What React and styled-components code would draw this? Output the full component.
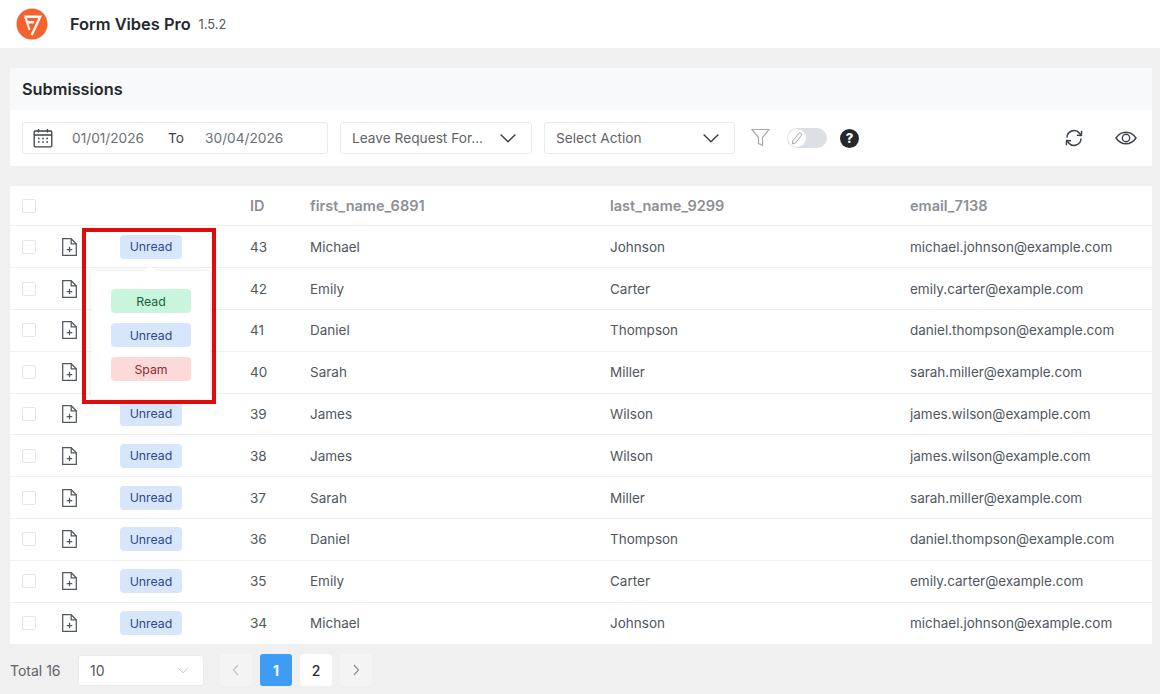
import React from "react";
import styled, { createGlobalStyle } from "styled-components";

const Global = createGlobalStyle`
  html, body { margin: 0; padding: 0; background: #f0f0f1; }
  body { font-family: Inter, "Liberation Sans", sans-serif; color: #50575e; }
  * { box-sizing: border-box; }
`;
const Page = styled.div`position: relative; width: 1160px; height: 694px; overflow: hidden; background: #f0f0f1;`;
const Header = styled.header`height: 48px; background: #fff; display: flex; align-items: center; padding-left: 16px;`;
const Brand = styled.span`margin-left: 22px; font-size: 16.4px; font-weight: 600; color: #23282d;`;
const Version = styled.span`margin-left: 8px; font-size: 12.8px; color: #50575e;`;
const Content = styled.main`padding: 20px 8px 0 10px;`;
const Title = styled.div`height: 42px; background: #f8f9fa; display: flex; align-items: center; padding-left: 12px; font-size: 16.300px; font-weight: 600; color: #23282d;`;
const Toolbar = styled.div`height: 56px; background: #fff; display: flex; align-items: center; padding: 0 15px 0 12px; margin-bottom: 20px;`;
const Field = styled.div`
  height: 32px; width: ${p => p.$w}px; margin-right: ${p => p.$mr || 0}px; border: 1px solid #e8eaec; border-radius: 3px;
  display: flex; align-items: center; padding: 0 ${p => p.$pr || 0}px 0 ${p => p.$pl || 0}px; font-size: 13.700px; color: #5f6368; background: #fff;
`;
const DateText = styled.span`margin-left: ${p => p.$ml}px; color: ${p => p.$dark ? "#3c434a" : "#6b7075"};`;
const Grow = styled.span`flex: 1; white-space: nowrap;`;
const IconSlot = styled.span`display: inline-flex; margin-left: ${p => p.$ml || 0}px;`;
const Toggle = styled.span`
  position: relative; width: 40px; height: 20px; border-radius: 10px; background: #dcdfe6; margin-left: 17px; display: inline-block;
`;
const Knob = styled.span`
  position: absolute; left: 1px; top: 1px; width: 18px; height: 18px; border-radius: 50%; background: #fff;
  display: flex; align-items: center; justify-content: center;
`;
const Help = styled.span`
  width: 19px; height: 19px; margin-left: 13px; border-radius: 50%; background: #23282d; color: #fff; font-size: 13px; font-weight: 800;
  display: flex; align-items: center; justify-content: center;
`;
const Spacer = styled.span`flex: 1;`;
const Table = styled.div`background: #fff;`;
const Row = styled.div`
  display: grid; grid-template-columns: 40px 58px 130px 60px 300px 300px 1fr; align-items: center;
  height: ${p => p.$head ? 40.4 : 41.8}px; border-bottom: ${p => p.$last ? "none" : "1px solid #f0f0f1"};
  font-size: ${p => p.$head ? 14.500 : 13.500}px; color: ${p => p.$head ? "#8c8f94" : "#50575e"}; font-weight: ${p => p.$head ? 600 : 400};
  padding-left: 12px;
`;
const Check = styled.span`display: block; width: 14px; height: 14px; border: 1px solid #e2e4e7; border-radius: 2px; background: #fff;`;
const DocCell = styled.span`display: flex;`;
const BadgeCell = styled.span`display: flex;`;
const Badge = styled.span`
  width: ${p => p.$w || 62}px; height: 24px; border-radius: 4px; display: flex; align-items: center; justify-content: center; font-size: 12.300px;
  background: ${p => p.$kind === "read" ? "#c9f5dd" : p.$kind === "spam" ? "#fcdada" : "#d8e6fb"};
  color: ${p => p.$kind === "read" ? "#14633c" : p.$kind === "spam" ? "#8f2a2a" : "#2a4a8a"};
`;
const Footer = styled.div`display: flex; align-items: center; height: 50px; padding-top: 2px;`;
const Total = styled.span`font-size: 14px; color: #5f6368; width: 68px; white-space: nowrap;`;
const PageSize = styled.div`
  width: 126px; height: 31px; background: #fff; border: 1px solid #e9ebed; border-radius: 3px; display: flex; align-items: center; justify-content: space-between;
  padding: 0 14px 0 11px; font-size: 14px; color: #50575e; margin-right: 16px;
`;
const PageBtn = styled.span`
  width: 32px; height: 32px; margin-right: 8px; border-radius: 3px; display: flex; align-items: center; justify-content: center; font-size: 14px;
  font-weight: ${p => p.$active ? 700 : 500};
  background: ${p => p.$active ? "#3f9cf5" : p.$muted ? "#f4f4f5" : "#fff"}; color: ${p => p.$active ? "#fff" : "#23282d"};
`;
const Popover = styled.div`
  position: absolute; left: 91px; top: 271px; width: 119px; height: 128px; background: #fff; box-shadow: 0 0 6px rgba(0,0,0,.1); border-radius: 2px;
  display: flex; flex-direction: column; gap: 10px; padding: 18px 0 0 20px;
  &::before { content: ""; position: absolute; left: 55px; top: -4px; width: 8px; height: 8px; background: #fff; transform: rotate(45deg); }
`;
const Highlight = styled.div`position: absolute; left: 82px; top: 228px; width: 134px; height: 176px; border: 4px solid #e00b0b; pointer-events: none;`;

const Logo = () => (
  <svg width="32" height="32" viewBox="0 0 32 32">
    <circle cx="16" cy="16" r="15.500" fill="#f4622d" />
    <path d="M7.500 7.500H26L16.800 27.500 14.600 26.700 22.300 10H11.600z" fill="#fff" />
    <path d="M8 8.500 10.800 9.500 14.200 21.500 12.800 22.500z" fill="#fff" />
    <path d="M11.500 13H18.500L17.500 15.400H12.300z" fill="#fff" />
  </svg>
);
const Calendar = () => (
  <svg width="20" height="20" viewBox="0 0 20 20" fill="none" stroke="#3c434a" strokeWidth="1.3">
    <rect x="1.2" y="3" width="17.6" height="15.8" rx="1" />
    <path d="M1.2 7h17.6M5.500 1v3.500M14.500 1v3.500" />
    <path d="M5 10.500h1.600M9.200 10.500h1.600M13.400 10.500h1.600M5 14h1.600M9.200 14h1.600M13.400 14h1.600" strokeWidth="1.500" />
  </svg>
);
const Chevron = ({ size = 18, color = "#3c434a" }) => (
  <svg width={size} height={size * 0.6} viewBox="0 0 18 11" fill="none" stroke={color} strokeWidth="1.500">
    <path d="M1.500 1.500 9 9l7.500-7.500" />
  </svg>
);
const Funnel = () => (
  <svg width="19" height="20" viewBox="0 0 19 20" fill="none" stroke="#a7aaad" strokeWidth="1.200">
    <path d="M1 1.500h17l-6.500 8v7.800l-4-1.800v-6z" />
  </svg>
);
const Pencil = () => (
  <svg width="14" height="14" viewBox="0 0 14 14" fill="none" stroke="#a7aaad" strokeWidth="1">
    <path d="M9.500 1.500 12 3.500 5.500 12l-3 1 .2-3.200z" />
  </svg>
);
const Refresh = () => (
  <svg width="18" height="18" viewBox="0 0 18 18" fill="none" stroke="#3c434a" strokeWidth="1.500">
    <path d="M2 8.500A7 7 0 0 1 14.500 4.300L16 6" />
    <path d="M16.600 1.800 16.400 6.400 11.900 6.200" />
    <path d="M16 9.500A7 7 0 0 1 3.500 13.700L2 12" />
    <path d="M1.400 16.200 1.600 11.600 6.100 11.800" />
  </svg>
);
const Eye = () => (
  <svg width="22" height="14" viewBox="0 0 22 14" fill="none" stroke="#3c434a" strokeWidth="1.400">
    <path d="M1 7c2.600-3.900 6-5.800 10-5.800S18.400 3.100 21 7c-2.600 3.900-6 5.800-10 5.800S3.600 10.900 1 7z" />
    <circle cx="11" cy="7" r="3.700" />
  </svg>
);
const Doc = () => (
  <svg width="15" height="18" viewBox="0 0 15 18" fill="none" stroke="#50575e" strokeWidth="1.250">
    <path d="M.7.700h8.500l5.100 5.100v11.500H.7z" />
    <path d="M9.200.700v5.100h5.100" />
    <path d="M7.500 8.700v5.600M4.700 11.500h5.600" />
  </svg>
);
const Arrow = ({ d, color }) => (
  <svg width="8" height="12" viewBox="0 0 8 12" fill="none" stroke={color} strokeWidth="1.200"><path d={d} /></svg>
);

const rows = [
  [43, "Michael", "Johnson", "michael.johnson@example.com"],
  [42, "Emily", "Carter", "emily.carter@example.com"],
  [41, "Daniel", "Thompson", "daniel.thompson@example.com"],
  [40, "Sarah", "Miller", "sarah.miller@example.com"],
  [39, "James", "Wilson", "james.wilson@example.com"],
  [38, "James", "Wilson", "james.wilson@example.com"],
  [37, "Sarah", "Miller", "sarah.miller@example.com"],
  [36, "Daniel", "Thompson", "daniel.thompson@example.com"],
  [35, "Emily", "Carter", "emily.carter@example.com"],
  [34, "Michael", "Johnson", "michael.johnson@example.com"],
];

export default function App() {
  return (
    <Page>
      <Global />
      <Header>
        <Logo />
        <Brand>Form Vibes Pro</Brand>
        <Version>1.5.2</Version>
      </Header>
      <Content>
        <Title>Submissions</Title>
        <Toolbar>
          <Field $w={306} $mr={12} $pl={10}>
            <Calendar />
            <DateText $ml={19}>01/01/2026</DateText>
            <DateText $ml={24} $dark>To</DateText>
            <DateText $ml={21}>30/04/2026</DateText>
          </Field>
          <Field $w={192} $mr={12} $pl={11} $pr={14}>
            <Grow>Leave Request For...</Grow>
            <Chevron />
          </Field>
          <Field $w={191} $pl={11} $pr={14}>
            <Grow>Select Action</Grow>
            <Chevron />
          </Field>
          <IconSlot $ml={16}><Funnel /></IconSlot>
          <Toggle><Knob><Pencil /></Knob></Toggle>
          <Help>?</Help>
          <Spacer />
          <Refresh />
          <IconSlot $ml={32}><Eye /></IconSlot>
        </Toolbar>
        <Table>
          <Row $head>
            <Check />
            <span />
            <span />
            <span>ID</span>
            <span>first_name_6891</span>
            <span>last_name_9299</span>
            <span>email_7138</span>
          </Row>
          {rows.map((r, i) => (
            <Row key={r[0]} $last={i === rows.length - 1}>
              <Check />
              <DocCell><Doc /></DocCell>
              <BadgeCell><Badge>Unread</Badge></BadgeCell>
              <span>{r[0]}</span>
              <span>{r[1]}</span>
              <span>{r[2]}</span>
              <span>{r[3]}</span>
            </Row>
          ))}
        </Table>
        <Footer>
          <Total>Total 16</Total>
          <PageSize>10<Chevron size={12} color="#c3c4c7" /></PageSize>
          <PageBtn $muted><Arrow d="M6 1 1.500 6 6 11" color="#c3c4c7" /></PageBtn>
          <PageBtn $active>1</PageBtn>
          <PageBtn>2</PageBtn>
          <PageBtn $muted><Arrow d="M2 1l4.500 5L2 11" color="#8c8f94" /></PageBtn>
        </Footer>
      </Content>
      <Popover>
        <Badge $w={80} $kind="read">Read</Badge>
        <Badge $w={80}>Unread</Badge>
        <Badge $w={80} $kind="spam">Spam</Badge>
      </Popover>
      <Highlight />
    </Page>
  );
}
